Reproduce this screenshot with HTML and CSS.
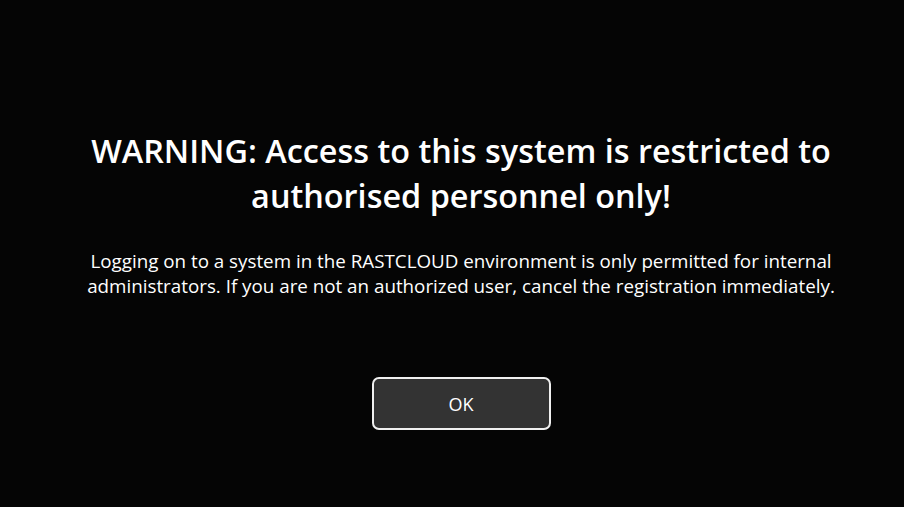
FILE: index.html
```html
<!DOCTYPE html>
<html>
<head>
<meta charset="utf-8">
<link rel="stylesheet" href="styles.css">
</head>
<body>
<main class="screen">
  <h1 class="title">WARNING: Access to this system is restricted to<br>authorised personnel only!</h1>
  <p class="message">Logging on to a system in the RASTCLOUD environment is only permitted for internal<br>administrators. If you are not an authorized user, cancel the registration immediately.</p>
  <button class="ok">OK</button>
</main>
</body>
</html>
```

FILE: styles.css
```css
html, body {
  margin: 0;
  padding: 0;
  background: #050505;
  height: 100%;
}
.screen {
  height: 507px;
  box-sizing: border-box;
  padding-left: 18px;
  display: flex;
  flex-direction: column;
  align-items: center;
  font-family: "Open Sans", "Noto Sans", sans-serif;
  color: #ffffff;
  text-align: center;
}
.title {
  margin: 128px 0 0;
  font-size: 32.4px;
  font-weight: 600;
  line-height: 45px;
  letter-spacing: 0;
  white-space: nowrap;
}
.message {
  margin: 31px 0 0;
  font-size: 18.8px;
  font-weight: 400;
  line-height: 25px;
  white-space: nowrap;
}
.ok {
  margin-top: 78px;
  width: 179px;
  height: 53px;
  box-sizing: border-box;
  background: #333333;
  border: 2px solid #f0f0f0;
  border-radius: 7px;
  color: #ffffff;
  font-family: "Open Sans", "Noto Sans", sans-serif;
  font-size: 18px;
  padding: 0;
}
```
